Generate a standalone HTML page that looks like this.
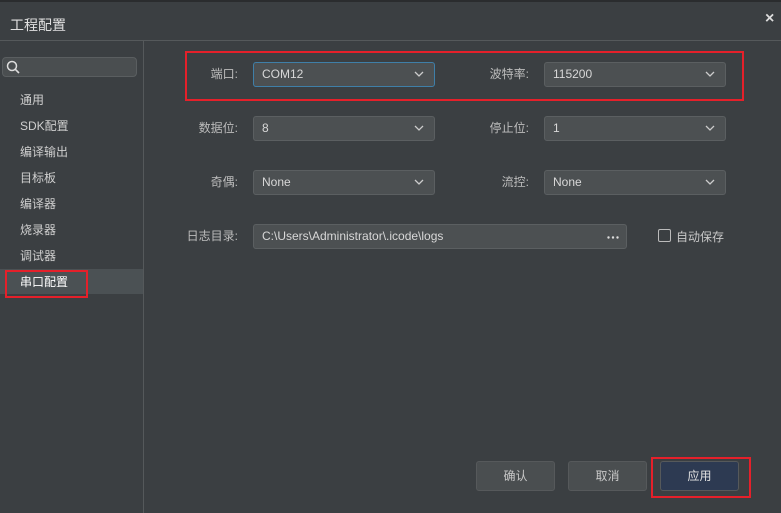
<!DOCTYPE html><html><head><meta charset="utf-8"><style>
*{margin:0;padding:0;box-sizing:border-box}
body{width:781px;height:513px;background:#3b3f42;font-family:"Liberation Sans","Noto Sans CJK SC",sans-serif;font-size:12px;color:#c8c8c8;position:relative;overflow:hidden}
.a{position:absolute}
.sel{position:absolute;height:25px;background:#4c5052;border:1px solid #5b5f61;border-radius:3px;padding-left:8px;line-height:23px;color:#d8d8d8}
.sel svg{position:absolute;right:10px;top:8px}
.lbl{position:absolute;text-align:right;width:80px;line-height:25px;color:#bdbdbd}
.mi{position:absolute;left:20px;color:#cfcfcf}
.red{position:absolute;border:2px solid #e5202a}
.btn{position:absolute;top:461px;width:79px;height:30px;border:1px solid #56595b;border-radius:3px;background:#4a4e50;text-align:center;line-height:28px;color:#c8c8c8}
</style></head><body>
<div class="a" style="left:0;top:0;width:781px;height:2px;background:#2a2c2e"></div>
<div class="a" style="left:10px;top:15px;font-size:14px;color:#e0e0e0">工程配置</div>
<div class="a" style="left:765px;top:10px;font-size:16px;color:#ddd;font-weight:bold">×</div>
<div class="a" style="left:0;top:40px;width:781px;height:1px;background:#55595b"></div>
<div class="a" style="left:143px;top:41px;width:1px;height:472px;background:#55595b"></div>
<div class="a" style="left:2px;top:57px;width:135px;height:20px;border:1px solid #5a5e60;border-radius:4px;background:#4a4e50"></div>
<svg class="a" style="left:6px;top:60px" width="14" height="14"><circle cx="6" cy="6" r="4.5" fill="none" stroke="#ddd" stroke-width="1.5"/><path d="M9.3 9.3L13 13" stroke="#ddd" stroke-width="1.6"/></svg>
<div class="mi" style="top:91px">通用</div>
<div class="mi" style="top:117px">SDK配置</div>
<div class="mi" style="top:143px">编译输出</div>
<div class="mi" style="top:169px">目标板</div>
<div class="mi" style="top:195px">编译器</div>
<div class="mi" style="top:221px">烧录器</div>
<div class="mi" style="top:247px">调试器</div>
<div class="a" style="left:0;top:269px;width:143px;height:25px;background:#4b5154"></div>
<div class="mi" style="top:273px;color:#fff">串口配置</div>
<div class="red" style="left:5px;top:270px;width:83px;height:28px"></div>

<div class="lbl" style="left:158px;top:62px">端口:</div>
<div class="sel" style="left:253px;top:62px;width:182px;border-color:#3f7fa8">COM12<svg width="10" height="6"><path d="M1 1l4 4 4-4" fill="none" stroke="#ccc" stroke-width="1.3"/></svg></div>
<div class="lbl" style="left:449px;top:62px">波特率:</div>
<div class="sel" style="left:544px;top:62px;width:182px">115200<svg width="10" height="6"><path d="M1 1l4 4 4-4" fill="none" stroke="#ccc" stroke-width="1.3"/></svg></div>
<div class="red" style="left:185px;top:51px;width:559px;height:50px"></div>

<div class="lbl" style="left:158px;top:116px">数据位:</div>
<div class="sel" style="left:253px;top:116px;width:182px">8<svg width="10" height="6"><path d="M1 1l4 4 4-4" fill="none" stroke="#ccc" stroke-width="1.3"/></svg></div>
<div class="lbl" style="left:449px;top:116px">停止位:</div>
<div class="sel" style="left:544px;top:116px;width:182px">1<svg width="10" height="6"><path d="M1 1l4 4 4-4" fill="none" stroke="#ccc" stroke-width="1.3"/></svg></div>

<div class="lbl" style="left:158px;top:170px">奇偶:</div>
<div class="sel" style="left:253px;top:170px;width:182px">None<svg width="10" height="6"><path d="M1 1l4 4 4-4" fill="none" stroke="#ccc" stroke-width="1.3"/></svg></div>
<div class="lbl" style="left:449px;top:170px">流控:</div>
<div class="sel" style="left:544px;top:170px;width:182px">None<svg width="10" height="6"><path d="M1 1l4 4 4-4" fill="none" stroke="#ccc" stroke-width="1.3"/></svg></div>

<div class="lbl" style="left:158px;top:224px">日志目录:</div>
<div class="sel" style="left:253px;top:224px;width:374px">C:\Users\Administrator\.icode\logs<svg style="right:7px;top:11px" width="12" height="3"><circle cx="1.5" cy="1.5" r="1.2" fill="#ddd"/><circle cx="6" cy="1.5" r="1.2" fill="#ddd"/><circle cx="10.5" cy="1.5" r="1.2" fill="#ddd"/></svg></div>
<div class="a" style="left:658px;top:229px;width:13px;height:13px;border:1px solid #bbb;border-radius:2px"></div>
<div class="a" style="left:676px;top:228px;color:#c8c8c8">自动保存</div>

<div class="btn" style="left:476px">确认</div>
<div class="btn" style="left:568px">取消</div>
<div class="btn" style="left:660px;background:#2d3a52;color:#e0e0e0">应用</div>
<div class="red" style="left:651px;top:457px;width:100px;height:41px"></div>
</body></html>
